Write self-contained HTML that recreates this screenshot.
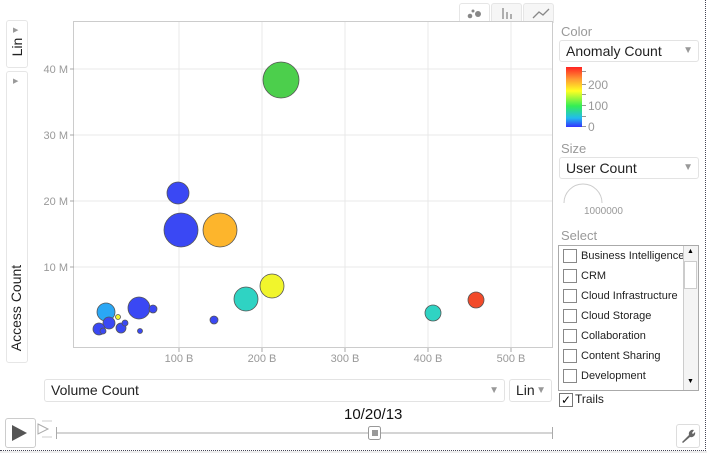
<!DOCTYPE html>
<html><head><style>
body{margin:0;width:707px;height:453px;background:#fff;font-family:"Liberation Sans",sans-serif;overflow:hidden;position:relative}
.a{position:absolute}
.box{position:absolute;border:1px solid #e6e6e6;border-radius:3px;background:#fff}
.lbl{position:absolute;color:#999;font-size:12px}
.sel{position:absolute;border:1px solid #e3e3e3;border-radius:3px;font-size:14px;color:#222;padding-left:6px;box-sizing:border-box}
.sel span.ar{position:absolute;right:5px;top:0;color:#999;font-size:10px}
.item{height:20px;font-size:11px;color:#222;display:flex;align-items:center}
.cb{width:12px;height:12px;border:1px solid #888;margin:0 4px 0 4px;background:#fff}
</style></head><body>
<div class="a" style="left:705px;top:0;width:0;height:451px;border-left:1px dotted #445"></div>
<div class="a" style="left:0;top:450px;width:706px;height:0;border-top:1px dotted #445"></div>
<div class="a" style="left:0;top:451px;width:707px;height:2px;background:#eee"></div>

<div class="box" style="left:459px;top:3px;width:29px;height:20px;border-bottom:none;border-radius:3px 3px 0 0"></div>
<div class="box" style="left:491px;top:3px;width:29px;height:18px;background:#f6f6f6;border-radius:3px 3px 0 0"></div>
<div class="box" style="left:523px;top:3px;width:29px;height:18px;background:#f6f6f6;border-radius:3px 3px 0 0"></div>
<svg class="a" style="left:459px;top:3px" width="95" height="20">
<circle cx="11" cy="13" r="2.3" fill="#888"/><circle cx="19" cy="11" r="3" fill="#888"/><circle cx="14" cy="8" r="1.5" fill="#888"/>
<g stroke="#888" stroke-width="1.3"><line x1="44" y1="5" x2="44" y2="16"/><line x1="48" y1="9" x2="48" y2="16"/><line x1="52" y1="11" x2="52" y2="16"/></g>
<polyline points="74,15 80,9 84,12 90,6" fill="none" stroke="#888" stroke-width="1.3"/>
</svg>

<div class="box" style="left:6px;top:20px;width:20px;height:46px"></div>
<div class="a" style="left:13px;top:26px;font-size:7px;color:#999">▶</div>
<div class="a" style="left:6px;top:35px;width:22px;height:24px;transform:rotate(-90deg);font-size:14px;color:#222;text-align:center;line-height:24px">Lin</div>
<div class="box" style="left:6px;top:71px;width:20px;height:290px"></div>
<div class="a" style="left:13px;top:77px;font-size:7px;color:#999">▶</div>
<div class="a" style="left:-34px;top:298px;width:100px;height:20px;transform:rotate(-90deg);font-size:14px;color:#222;text-align:center;line-height:20px;white-space:nowrap">Access Count</div>

<svg class="a" style="left:0;top:0" width="560" height="365" font-family="Liberation Sans" font-size="11" fill="#999">
<rect x="73.5" y="21.5" width="479" height="326" fill="#fff" stroke="#ccc"/>
<g stroke="#e8e8e8">
<line x1="179" y1="22" x2="179" y2="347"/><line x1="262" y1="22" x2="262" y2="347"/><line x1="345" y1="22" x2="345" y2="347"/><line x1="428" y1="22" x2="428" y2="347"/><line x1="511" y1="22" x2="511" y2="347"/>
<line x1="74" y1="69" x2="552" y2="69"/><line x1="74" y1="135" x2="552" y2="135"/><line x1="74" y1="201" x2="552" y2="201"/><line x1="74" y1="267" x2="552" y2="267"/>
</g>
<g stroke="#aaa"><line x1="70" y1="69" x2="74" y2="69"/><line x1="70" y1="135" x2="74" y2="135"/><line x1="70" y1="201" x2="74" y2="201"/><line x1="70" y1="267" x2="74" y2="267"/>
<line x1="179" y1="348" x2="179" y2="352"/><line x1="262" y1="348" x2="262" y2="352"/><line x1="345" y1="348" x2="345" y2="352"/><line x1="428" y1="348" x2="428" y2="352"/><line x1="511" y1="348" x2="511" y2="352"/></g>
<g text-anchor="end"><text x="68" y="73">40 M</text><text x="68" y="139">30 M</text><text x="68" y="205">20 M</text><text x="68" y="271">10 M</text></g>
<g text-anchor="middle"><text x="179" y="362">100 B</text><text x="262" y="362">200 B</text><text x="345" y="362">300 B</text><text x="428" y="362">400 B</text><text x="511" y="362">500 B</text></g>
<g stroke="#555" stroke-width="0.8">
<circle cx="281" cy="80" r="18" fill="#4ccf4c"/>
<circle cx="178" cy="193" r="11" fill="#3a48f4"/>
<circle cx="181" cy="230" r="17" fill="#3a48f4"/>
<circle cx="220" cy="230" r="17" fill="#fdb52c"/>
<circle cx="272" cy="286" r="12" fill="#f1f52c"/>
<circle cx="246" cy="299" r="12" fill="#2fd3c3"/>
<circle cx="433" cy="313" r="8" fill="#2fd3c3"/>
<circle cx="476" cy="300" r="8" fill="#f24a2a"/>
<circle cx="214" cy="320" r="4" fill="#3a48f4"/>
<circle cx="106" cy="312" r="9" fill="#2aa7f5"/>
<circle cx="139" cy="308" r="11" fill="#3a48f4"/>
<circle cx="153" cy="309" r="4" fill="#3a48f4"/>
<circle cx="118" cy="317" r="2.5" fill="#f1f52c"/>
<circle cx="109" cy="323" r="6" fill="#3a48f4"/>
<circle cx="121" cy="328" r="5" fill="#3a48f4"/>
<circle cx="125" cy="323" r="3" fill="#3a48f4"/>
<circle cx="99" cy="329" r="6" fill="#3a48f4"/>
<circle cx="103" cy="331" r="3" fill="#3a48f4"/>
<circle cx="140" cy="331" r="2.5" fill="#3a48f4"/>
</g>
</svg>

<div class="sel" style="left:44px;top:379px;width:461px;height:23px;line-height:21px">Volume Count<span class="ar" style="line-height:21px">▼</span></div>
<div class="sel" style="left:509px;top:379px;width:43px;height:23px;line-height:21px">Lin<span class="ar" style="line-height:21px">▼</span></div>
<div class="a" style="left:344px;top:406px;font-size:15px;color:#111">10/20/13</div>
<div class="box" style="left:5px;top:418px;width:29px;height:28px;border-color:#ccc"></div>
<svg class="a" style="left:0;top:415px" width="560" height="35">
<polygon points="12,10 27,18 12,26" fill="#555"/>
<polygon points="38,9 48,14 38,19" fill="none" stroke="#aaa"/>
<g stroke="#ccc"><line x1="42" y1="6" x2="52" y2="6"/><line x1="42" y1="22" x2="52" y2="22"/></g>
<line x1="56" y1="18" x2="552" y2="18" stroke="#aaa"/>
<line x1="56.5" y1="12" x2="56.5" y2="24" stroke="#aaa"/><line x1="552.5" y1="12" x2="552.5" y2="24" stroke="#aaa"/>
<rect x="368.5" y="11.5" width="12" height="13" rx="2" fill="#fff" stroke="#999"/>
<g stroke="#333"><line x1="373" y1="15" x2="373" y2="21"/><line x1="375" y1="15" x2="375" y2="21"/><line x1="377" y1="15" x2="377" y2="21"/></g>
</svg>

<div class="lbl" style="left:561px;top:24px;font-size:13px">Color</div>
<div class="sel" style="left:559px;top:40px;width:140px;height:22px;line-height:20px">Anomaly Count<span class="ar" style="line-height:20px">▼</span></div>
<div class="a" style="left:566px;top:67px;width:16px;height:60px;background:linear-gradient(#f22,#f93 20%,#ff2 40%,#3e5 65%,#2be 85%,#33f)"></div>
<svg class="a" style="left:582px;top:66px" width="6" height="64"><g stroke="#999"><line x1="0" y1="5.5" x2="4" y2="5.5"/><line x1="0" y1="18.5" x2="4" y2="18.5"/><line x1="0" y1="28.5" x2="4" y2="28.5"/><line x1="0" y1="39.5" x2="4" y2="39.5"/><line x1="0" y1="50.5" x2="4" y2="50.5"/><line x1="0" y1="60.5" x2="4" y2="60.5"/></g></svg>
<div class="lbl" style="left:588px;top:78px;font-size:12px">200</div>
<div class="lbl" style="left:588px;top:99px;font-size:12px">100</div>
<div class="lbl" style="left:588px;top:120px;font-size:12px">0</div>
<div class="lbl" style="left:561px;top:141px;font-size:13px">Size</div>
<div class="sel" style="left:559px;top:157px;width:140px;height:22px;line-height:20px">User Count<span class="ar" style="line-height:20px">▼</span></div>
<svg class="a" style="left:560px;top:180px" width="50" height="25"><path d="M4,23 A19,19 0 0 1 42,23" fill="none" stroke="#ccc"/></svg>
<div class="lbl" style="left:584px;top:206px;font-size:10px">1000000</div>
<div class="lbl" style="left:561px;top:228px;font-size:13px">Select</div>
<div class="a" style="left:558px;top:245px;width:139px;height:144px;border:1px solid #aaa;overflow:hidden">
<div class="item"><div class="cb"></div>Business Intelligence</div>
<div class="item"><div class="cb"></div>CRM</div>
<div class="item"><div class="cb"></div>Cloud Infrastructure</div>
<div class="item"><div class="cb"></div>Cloud Storage</div>
<div class="item"><div class="cb"></div>Collaboration</div>
<div class="item"><div class="cb"></div>Content Sharing</div>
<div class="item"><div class="cb"></div>Development</div>
<div class="a" style="left:124px;top:0;width:15px;height:144px;background:#f4f4f4;border-left:1px solid #ccc"></div>
<div class="a" style="left:125px;top:15px;width:13px;height:28px;background:#fff;border:1px solid #ccc;box-sizing:border-box"></div>
<div class="a" style="left:128px;top:2px;font-size:7px">▲</div>
<div class="a" style="left:128px;top:132px;font-size:7px">▼</div>
</div>
<div class="a" style="left:559px;top:393px;width:12px;height:12px;border:1px solid #777;font-size:12px;line-height:12px;text-align:center">✓</div>
<div class="a" style="left:575px;top:392px;font-size:12px;color:#222">Trails</div>
<div class="box" style="left:676px;top:424px;width:22px;height:22px;border-color:#ddd"></div>
<svg class="a" style="left:679px;top:427px" width="18" height="18"><path d="M3,15 L10,8 A4,4 0 0 1 15,3 L13,6 L14,7 L16,5 A4,4 0 0 1 11,10 L4,16 Z" fill="#666"/></svg>
</body></html>
